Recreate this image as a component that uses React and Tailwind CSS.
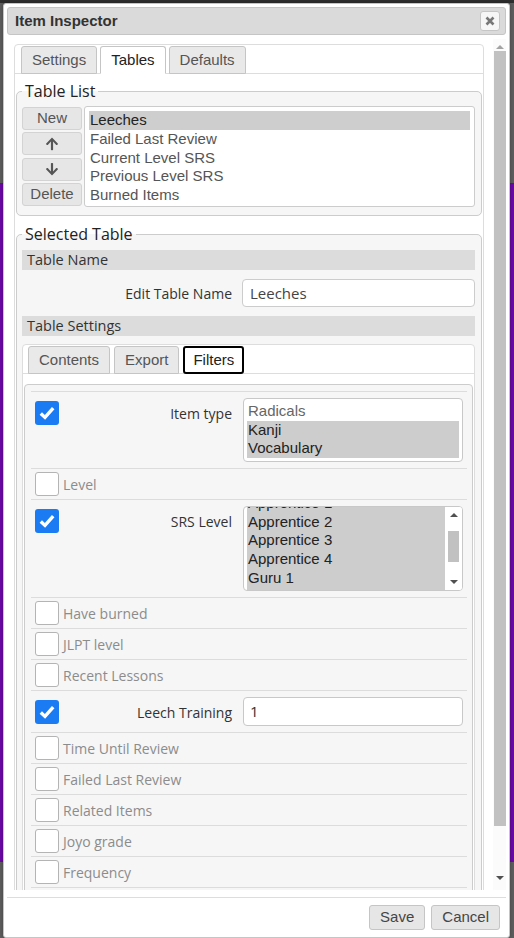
import { FaArrowUp, FaArrowDown } from "react-icons/fa";

const ARIAL = "font-['Liberation_Sans',Arial,sans-serif]";
const OPEN = "font-['Open_Sans',sans-serif]";

const TABLES = [
  "Leeches",
  "Failed Last Review",
  "Current Level SRS",
  "Previous Level SRS",
  "Burned Items",
];

const SRS_LEVELS = ["Apprentice 1", "Apprentice 2", "Apprentice 3", "Apprentice 4", "Guru 1"];

function Tab({ label, active, focused, px = "px-[10px]" }) {
  let cls = "border-[#c5c5c5] bg-[#e9e9e9] text-[#555] border";
  if (active) cls = "border-[#c5c5c5] border-b-white bg-white text-[#222] border";
  if (focused) cls = "border-2 border-black bg-white text-[#222] rounded-b-[3px]";
  return (
    <div
      className={`-mb-px flex h-[28px] items-center rounded-t-[3px] ${px} text-[15px] ${ARIAL} ${cls}`}
    >
      {label}
    </div>
  );
}

function Check({ on }) {
  if (on) {
    return (
      <div className="flex h-[24px] w-[24px] shrink-0 items-center justify-center rounded-[3px] bg-[#1a7bf2]">
        <svg width="18" height="18" viewBox="0 0 18 18">
          <path
            d="M2.8 9.4 L7 13.4 L15.2 4.2"
            fill="none"
            stroke="white"
            strokeWidth="3.4"
          />
        </svg>
      </div>
    );
  }
  return (
    <div className="h-[24px] w-[24px] shrink-0 rounded-[3px] border border-[#b4b4b4] bg-white" />
  );
}

function OffRow({ label }) {
  return (
    <div className="flex items-center gap-[4px] border-t border-[#dcdcdc] px-[4px] py-[3px]">
      <Check />
      <span className={`${OPEN} text-[14px] text-[#8c8c8c]`}>{label}</span>
    </div>
  );
}

function OnRow({ label, children }) {
  return (
    <div className="flex items-start border-t border-[#dcdcdc] px-[4px] py-[6px]">
      <div className="mt-[3px]">
        <Check on />
      </div>
      <div
        className={`mt-[3px] flex h-[24px] w-[184px] items-center justify-end pr-[11px] ${OPEN} text-[14px] text-[#333]`}
      >
        {label}
      </div>
      <div className="flex-1">{children}</div>
    </div>
  );
}

function Legend({ children }) {
  return (
    <legend className={`px-[3px] ${OPEN} text-[16px] leading-[22px] text-[#222]`}>
      {children}
    </legend>
  );
}

function SectionHead({ children }) {
  return (
    <div className={`h-[20px] bg-[#dcdcdc] px-[5px] ${OPEN} text-[14.5px] leading-[20px] text-[#333]`}>
      {children}
    </div>
  );
}

function SmallButton({ children }) {
  return (
    <div
      className={`flex h-[23px] items-center justify-center rounded-[3px] border border-[#d3d3d3] bg-[#e6e6e6] text-[15px] text-[#555] ${ARIAL}`}
    >
      {children}
    </div>
  );
}

export default function App() {
  return (
    <div className="relative h-[938px] w-[514px] overflow-hidden bg-[#5c5c5c]">
      <div className="flex h-full flex-col">
        <div className="h-[3px] bg-[#2e2e2e]" />
        <div className="h-[180px] bg-[#5e5e5e]" />
        <div className="h-[679px] bg-[#6b0aa6]" />
        <div className="flex-1 bg-[#5e5e5e]" />
      </div>

      <div className="absolute left-[3px] top-[3px] w-[507px] rounded-[3px] border border-[#c5c5c5] bg-white p-[3px] shadow-[0_0_4px_rgba(0,0,0,0.3)]">
        {/* title bar */}
        <div className="flex h-[28px] items-center justify-between rounded-[3px] border border-[#c5c5c5] bg-[#dadada] pl-[7px] pr-[5px]">
          <span className={`${ARIAL} text-[15px] font-bold text-[#333]`}>
            Item Inspector
          </span>
          <div className="flex h-[20px] w-[20px] items-center justify-center rounded-[3px] border border-[#c5c5c5] bg-[#f6f6f6]">
            <svg width="10" height="10" viewBox="0 0 10 10">
              <path d="M1.5 1.5 L8.5 8.5 M8.5 1.5 L1.5 8.5" stroke="#777" strokeWidth="2.6" />
            </svg>
          </div>
        </div>

        {/* scroll area */}
        <div className="mt-[4px] flex h-[851px]">
          <div className="h-full flex-1 overflow-hidden pl-[7px] pr-[9px] pt-[5px]">
            <div className="rounded-[4px] border border-[#dddddd] bg-white">
              <div className="flex gap-[3px] border-b border-[#dddddd] pl-[6px] pt-[1px]">
                <Tab label="Settings" />
                <Tab label="Tables" active />
                <Tab label="Defaults" />
              </div>

              <div className="px-[1px] pt-[6px]">
                <fieldset className="rounded-[5px] border border-[#cccccc] bg-[#f6f6f6] pb-[8px] pl-[5px] pr-[6px]">
                  <Legend>Table List</Legend>
                  <div className="mt-[4px] flex h-[101px] gap-[2px]">
                    <div className="flex w-[60px] flex-col justify-between py-[1px]">
                      <SmallButton>New</SmallButton>
                      <SmallButton>
                        <FaArrowUp size={14} color="#555" />
                      </SmallButton>
                      <SmallButton>
                        <FaArrowDown size={14} color="#555" />
                      </SmallButton>
                      <SmallButton>Delete</SmallButton>
                    </div>
                    <div className="flex-1 rounded-[3px] border border-[#cccccc] bg-white px-[4px] py-[4px]">
                      {TABLES.map((t, i) => (
                        <div
                          key={t}
                          className={`h-[18.8px] px-[1px] text-[15px] leading-[18.8px] ${ARIAL} ${
                            i === 0 ? "bg-[#cecece] text-[#222]" : "text-[#555]"
                          }`}
                        >
                          {t}
                        </div>
                      ))}
                    </div>
                  </div>
                </fieldset>

                <fieldset className="mt-[7px] rounded-[5px] border border-[#cccccc] bg-[#f6f6f6] pl-[5px] pr-[6px]">
                  <Legend>Selected Table</Legend>
                  <div className="pt-[5px]">
                    <SectionHead>Table Name</SectionHead>
                    <div className="mt-[9px] flex items-center">
                      <div className={`w-[220px] pr-[10px] text-right ${OPEN} text-[14px] text-[#333]`}>
                        Edit Table Name
                      </div>
                      <div
                        className={`flex h-[28px] flex-1 items-center rounded-[4px] border border-[#cccccc] bg-white px-[7px] ${OPEN} text-[15px] text-[#444]`}
                      >
                        Leeches
                      </div>
                    </div>
                    <div className="mt-[9px]">
                      <SectionHead>Table Settings</SectionHead>
                    </div>

                    <div className="mt-[8px] rounded-[4px] border border-[#dddddd] bg-white">
                      <div className="flex gap-[4px] border-b border-[#dddddd] pl-[5px] pt-[1px]">
                        <Tab label="Contents" />
                        <Tab label="Export" />
                        <Tab label="Filters" focused px="px-[8px]" />
                      </div>
                      <div className="px-[1px] pt-[10px]">
                        <div className="rounded-[4px] border border-[#cccccc] bg-[#f6f6f6] pl-[6px] pr-[5px] pt-[6px]">
                          <OnRow label="Item type">
                            <div className="h-[64px] rounded-[4px] border border-[#c8c8c8] bg-white p-[3px]">
                              {["Radicals", "Kanji", "Vocabulary"].map((t, i) => (
                                <div
                                  key={t}
                                  className={`h-[18.6px] px-[1px] text-[15px] leading-[18.6px] ${ARIAL} ${
                                    i === 0 ? "text-[#666]" : "bg-[#cdcdcd] text-[#222]"
                                  }`}
                                >
                                  {t}
                                </div>
                              ))}
                            </div>
                          </OnRow>
                          <OffRow label="Level" />
                          <OnRow label="SRS Level">
                            <div className="flex h-[85px] overflow-hidden rounded-[4px] border border-[#c8c8c8] bg-white pl-[3px]">
                              <div className="flex-1 overflow-hidden bg-[#cdcdcd]">
                                <div className="-mt-[13px]">
                                  {SRS_LEVELS.map((t) => (
                                    <div
                                      key={t}
                                      className={`h-[18.7px] px-[1px] text-[15px] leading-[18.7px] text-[#222] ${ARIAL}`}
                                    >
                                      {t}
                                    </div>
                                  ))}
                                </div>
                              </div>
                              <div className="flex w-[17px] flex-col items-center bg-white">
                                <div className="flex h-[16px] items-center">
                                  <div className="h-0 w-0 border-x-[4px] border-b-[4px] border-x-transparent border-b-[#505050]" />
                                </div>
                                <div className="mt-[8px] h-[31px] w-[11px] bg-[#c1c1c1]" />
                                <div className="flex-1" />
                                <div className="flex h-[16px] items-center">
                                  <div className="h-0 w-0 border-x-[4px] border-t-[4px] border-x-transparent border-t-[#505050]" />
                                </div>
                              </div>
                            </div>
                          </OnRow>
                          <OffRow label="Have burned" />
                          <OffRow label="JLPT level" />
                          <OffRow label="Recent Lessons" />
                          <OnRow label="Leech Training">
                            <div
                              className={`flex h-[29px] items-center rounded-[4px] border border-[#c8c8c8] bg-white px-[6px] ${OPEN} text-[15px] text-[#333]`}
                            >
                              1
                            </div>
                          </OnRow>
                          <OffRow label="Time Until Review" />
                          <OffRow label="Failed Last Review" />
                          <OffRow label="Related Items" />
                          <OffRow label="Joyo grade" />
                          <OffRow label="Frequency" />
                          <div className="h-[40px] border-t border-[#dcdcdc]" />
                        </div>
                      </div>
                    </div>
                  </div>
                </fieldset>
              </div>
            </div>
          </div>

          {/* dialog scrollbar */}
          <div className="flex w-[13px] flex-col items-center bg-[#fbfbfb]">
            <div className="flex h-[10px] items-end">
              <div className="h-0 w-0 border-x-[4px] border-b-[4px] border-x-transparent border-b-[#a3a3a3]" />
            </div>
            <div className="mt-[2px] h-[775px] w-[12px] bg-[#c1c1c1]" />
            <div className="flex-1" />
            <div className="flex h-[14px] items-start">
              <div className="h-0 w-0 border-x-[4px] border-t-[4px] border-x-transparent border-t-[#505050]" />
            </div>
          </div>
        </div>

        {/* footer */}
        <div className="mt-[7px] flex justify-end gap-[6px] border-t border-[#dddddd] px-[6px] pb-[4px] pt-[7px]">
          {["Save", "Cancel"].map((b) => (
            <div
              key={b}
              className={`flex h-[25px] items-center rounded-[3px] border border-[#c5c5c5] bg-[#e6e6e6] px-[10px] text-[15px] text-[#454545] ${ARIAL}`}
            >
              {b}
            </div>
          ))}
        </div>
      </div>
    </div>
  );
}
